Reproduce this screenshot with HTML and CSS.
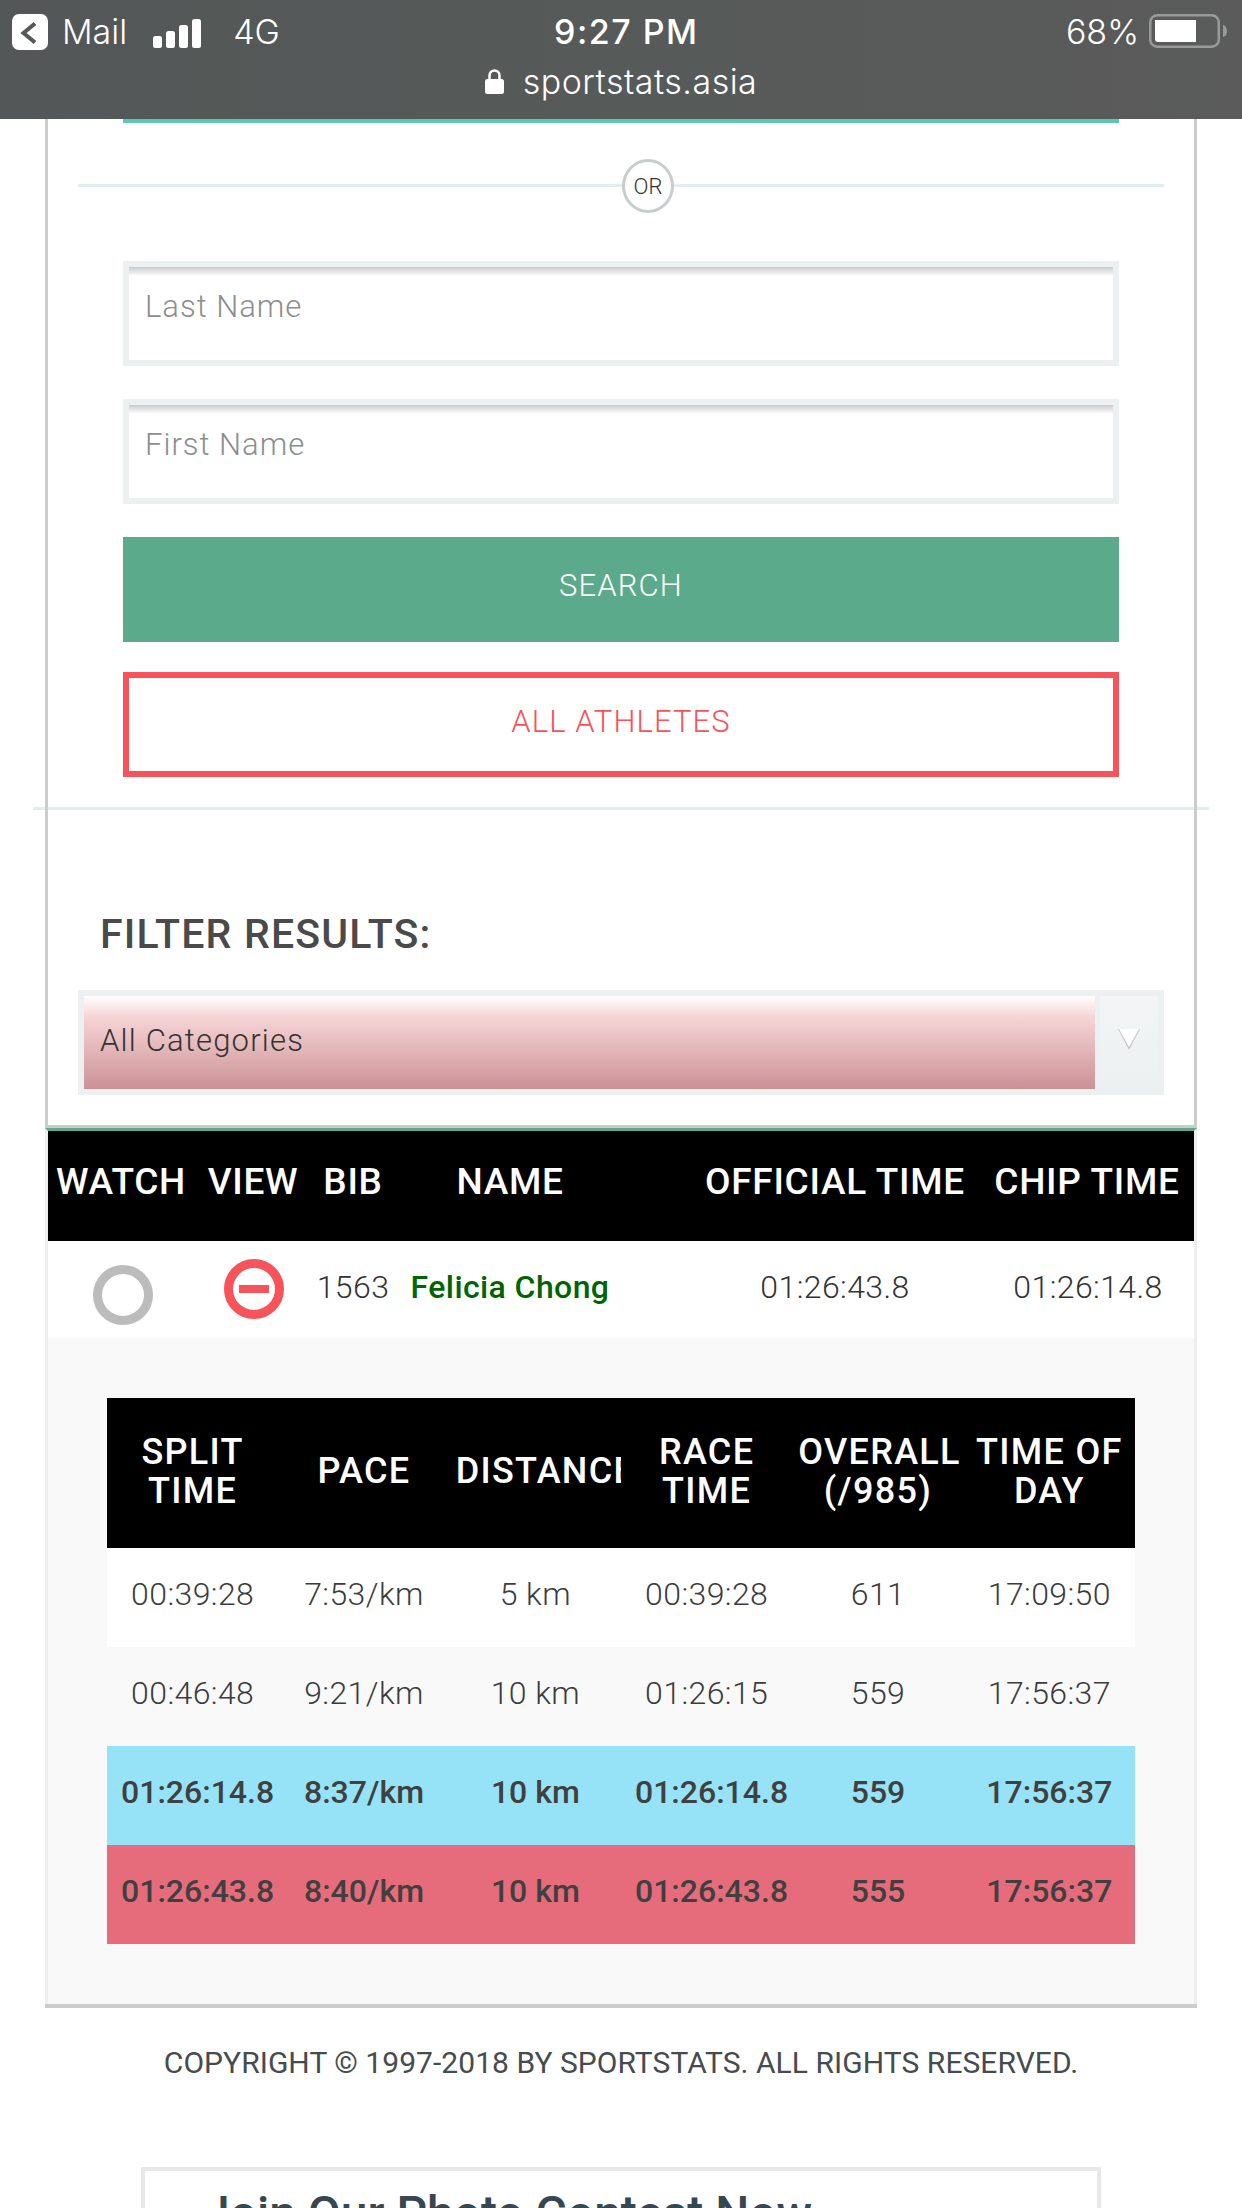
FILE: index.html
```html
<!DOCTYPE html>
<html lang="en">
<head>
<meta charset="utf-8">
<title>Sportstats results</title>
<link rel="stylesheet" href="styles.css">
</head>
<body>
<header class="status">
  <div class="status-top">
    <div class="status-left">
      <svg class="back" viewBox="0 0 36 36" width="36" height="36"><rect width="36" height="36" rx="7" fill="#fff"/><path d="M23 9.500 11.500 19 23 28.500" fill="none" stroke="#565959" stroke-width="4"/></svg>
      <span class="mail">Mail</span>
      <svg class="signal" viewBox="0 0 48 29" width="48" height="29"><rect x="0" y="17" width="9" height="12" rx="2.500" fill="#fff"/><rect x="13" y="12" width="9" height="17" rx="2.500" fill="#fff"/><rect x="26" y="6" width="9" height="23" rx="2.500" fill="#fff"/><rect x="39" y="0" width="9" height="29" rx="2.500" fill="#fff"/></svg>
      <span class="net">4G</span>
    </div>
    <div class="time">9:27 PM</div>
    <div class="status-right">
      <span class="pct">68%</span>
      <svg class="battery" viewBox="0 0 78 34" width="78" height="34"><rect x="1.250" y="1.250" width="68.500" height="31.500" rx="7" fill="none" stroke="#999b9b" stroke-width="2.500"/><path d="M6 6h41v22H9a3 3 0 0 1-3-3z" fill="#fff"/><path d="M74 11c2.500.6 4 3 4 6s-1.500 5.400-4 6z" fill="#999b9b"/></svg>
    </div>
  </div>
  <div class="url">
    <svg class="lock" viewBox="0 0 19 25" width="19" height="25"><path d="M4.500 11V6.500a5 5 0 0 1 10 0V11" fill="none" stroke="#fff" stroke-width="2.500"/><rect y="10" width="19" height="15" rx="2.500" fill="#fff"/></svg>
    <span>sportstats.asia</span>
  </div>
</header>

<main class="page">
  <section class="panel">
    <div class="teal"></div>
    <div class="or">
      <span class="or-line or-line-a"></span>
      <span class="or-badge">OR</span>
      <span class="or-line or-line-b"></span>
    </div>
    <form class="form">
      <input class="field" type="text" placeholder="Last Name">
      <input class="field" type="text" placeholder="First Name">
      <div class="btn btn-search">SEARCH</div>
      <div class="btn btn-all">ALL ATHLETES</div>
    </form>
    <div class="divider"></div>
    <h2 class="filter-title">FILTER RESULTS:</h2>
    <div class="select">
      <div class="select-value">All Categories</div>
      <div class="select-arrow">
        <svg viewBox="0 0 22 22" width="22" height="22"><path d="M0 0h22L11 21z" fill="#c3c7c9"/><path d="M1 0h20L11 18z" fill="#fff"/></svg>
      </div>
    </div>
  </section>

  <section class="results">
    <div class="rt-row rt-head">
      <div>WATCH</div><div>VIEW</div><div>BIB</div><div class="rt-name">NAME</div><div>OFFICIAL TIME</div><div>CHIP TIME</div>
    </div>
    <div class="rt-row rt-body">
      <div class="rt-watch"><svg viewBox="0 0 60 60" width="60" height="60"><circle cx="30" cy="30" r="25.500" fill="none" stroke="#bcbcbc" stroke-width="9"/></svg></div>
      <div class="rt-view"><svg viewBox="0 0 60 60" width="60" height="60"><circle cx="30" cy="30" r="25.500" fill="none" stroke="#f6535b" stroke-width="9"/><rect x="15" y="26" width="30" height="8" fill="#f6535b"/></svg></div>
      <div>1563</div>
      <div class="rt-name athlete">Felicia Chong</div>
      <div>01:26:43.8</div>
      <div class="rt-chip">01:26:14.8</div>
    </div>
    <div class="detail">
      <div class="sp-row sp-head">
        <div>SPLIT<br>TIME</div><div>PACE</div><div>DISTANCE</div><div>RACE<br>TIME</div><div>OVERALL<br>(/985)</div><div>TIME OF<br>DAY</div>
      </div>
      <div class="sp-row sp-data sp-white">
        <div>00:39:28</div><div>7:53/km</div><div>5 km</div><div>00:39:28</div><div>611</div><div>17:09:50</div>
      </div>
      <div class="sp-row sp-data">
        <div>00:46:48</div><div>9:21/km</div><div>10 km</div><div>01:26:15</div><div>559</div><div>17:56:37</div>
      </div>
      <div class="sp-row sp-data sp-blue">
        <div>01:26:14.8</div><div>8:37/km</div><div>10 km</div><div>01:26:14.8</div><div>559</div><div>17:56:37</div>
      </div>
      <div class="sp-row sp-data sp-red">
        <div>01:26:43.8</div><div>8:40/km</div><div>10 km</div><div>01:26:43.8</div><div>555</div><div>17:56:37</div>
      </div>
    </div>
  </section>

  <footer class="copyright">COPYRIGHT © 1997-2018 BY SPORTSTATS. ALL RIGHTS RESERVED.</footer>

  <aside class="contest">
    <h3>Join Our Photo Contest Now</h3>
  </aside>
</main>
</body>
</html>
```
FILE: styles.css
```css
* { box-sizing: border-box; }
html { margin: 0; padding: 0; background: #fff; }
body {
  margin: 0;
  padding: 0;
  width: 1242px;
  height: 2208px;
  overflow: hidden;
  font-family: Roboto, "Liberation Sans", sans-serif;
  color: #444;
}

/* iOS status bar */
.status {
  height: 119px;
  background: linear-gradient(90deg, #545757, #565a59 50%, #5a5b5a);
  color: #fff;
  padding-top: 14px;
  font-family: Inter, Roboto, sans-serif;
}
.status-top {
  display: grid;
  grid-template-columns: 542px auto 1fr;
  padding: 0 15px 0 12px;
  height: 36px;
  align-items: center;
  font-size: 34px;
  line-height: 36px;
}
.status-left { display: flex; align-items: center; }
.back { display: block; }
.mail { margin-left: 14px; font-weight: 300; }
.signal { display: block; margin-left: 26px; margin-top: 2px; }
.net { margin-left: 32px; font-weight: 300; }
.time { font-weight: 500; letter-spacing: 1.500px; }
.status-right { display: flex; justify-content: flex-end; align-items: center; }
.pct { font-weight: 300; margin-right: 10px; }
.battery { display: block; margin-top: -2px; }
.url {
  display: flex;
  justify-content: center;
  align-items: center;
  gap: 19px;
  margin-top: 15px;
  height: 32px;
  font-size: 34px;
  font-weight: 300;
  letter-spacing: .5px;
}
.lock { display: block; }

/* top panel */
.page { display: block; }
.panel {
  margin: 0 45px;
  border: 3px solid #ccc;
  border-top: 0;
  padding-bottom: 30px;
}
.teal { height: 4px; margin: 0 75px; background: #5bc8b6; }
.or {
  display: flex;
  align-items: center;
  margin: 36px 30px 0;
  height: 54px;
}
.or-line { height: 3px; margin-bottom: 2px; background: #e2edf0; }
.or-line-a { width: 544px; }
.or-line-b { flex: 1; }
.or-badge {
  width: 52px;
  height: 54px;
  border: 3px solid #c9cccc;
  border-radius: 50%;
  display: flex;
  align-items: center;
  justify-content: center;
  font-size: 22px;
  font-weight: 300;
  color: #333;
  background: #fff;
}
.form {
  display: flex;
  flex-direction: column;
  margin: 48px 75px 0;
  gap: 33px;
}
.field {
  display: block;
  width: 100%;
  height: 105px;
  border: 6px solid #ecf0f1;
  padding: 0 16px 14px;
  margin: 0;
  border-radius: 0;
  outline: 0;
  background: linear-gradient(#c9cbcb, #fff 9px);
  font-family: inherit;
  font-size: 31px;
  font-weight: 300;
  letter-spacing: 1px;
}
.field::placeholder { color: #8b8e8e; opacity: 1; }
.btn {
  height: 105px;
  display: flex;
  align-items: center;
  justify-content: center;
  font-size: 31px;
  font-weight: 300;
  letter-spacing: 1.100px;
  padding-bottom: 9px;
}
.btn-search { background: #5baa8c; color: #fff; }
.btn-all {
  margin-top: -3px;
  border: 6px solid #f6535b;
  color: #f6535b;
  padding-bottom: 7px;
}
/* sits behind the panel's side borders, as in the original */
.divider {
  position: relative;
  z-index: -1;
  height: 3px;
  margin: 30px -15px 0;
  background: #e2edf0;
}
.filter-title {
  margin: 0;
  padding: 103px 0 35px 52px;
  font-size: 41px;
  line-height: 42px;
  font-weight: 500;
  letter-spacing: 1.200px;
  color: #4a4a4a;
}
.select {
  display: flex;
  margin: 0 30px;
  height: 105px;
  border: 6px solid #ecf0f1;
  background: #ecf0f1;
}
.select-value {
  width: 1011px;
  background: linear-gradient(#fff 0%, #f6d5d7 22%, #cc9195 100%);
  font-size: 31px;
  font-weight: 300;
  letter-spacing: 1.200px;
  color: #333;
  padding: 25px 16px 0;
  line-height: 40px;
}
.select-arrow {
  width: 58px;
  margin-left: 5px;
  background: linear-gradient(#f3f5f6, #ecf0f1);
  display: flex;
  align-items: flex-start;
  justify-content: center;
  padding-top: 33px;
}
.select-arrow svg { display: block; }

/* results */
.results {
  margin: 0 45px;
  border: 3px solid #eee;
  border-top: 3px solid #5baa8c;
  border-bottom: 0;
  box-shadow: 0 4px 0 #ccc;
  background: #f9f9f9;
  height: 876px;
}
.rt-row {
  display: grid;
  grid-template-columns: 146px 118px 82px 296px 290px 214px;
  text-align: center;
}
.rt-name { padding-right: 64px; }
.rt-head {
  height: 110px;
  background: #000;
  color: #fff;
  font-size: 37px;
  font-weight: 500;
  letter-spacing: .7px;
  line-height: 102px;
}
.rt-body {
  height: 97px;
  background: #fff;
  font-size: 32px;
  font-weight: 300;
  line-height: 92px;
  letter-spacing: .4px;
  color: #333;
}
.rt-body > div { white-space: nowrap; }
.rt-chip { padding-left: 2px; }
.athlete { color: #006400; font-weight: 500; }
.rt-watch svg, .rt-view svg { display: block; margin: 0 auto; }
.rt-watch { padding-top: 24px; padding-left: 4px; }
.rt-view { padding-top: 18px; padding-left: 2px; }
.detail { padding: 60px 59px 0; }
.sp-row { display: grid; grid-template-columns: repeat(6, minmax(0, 1fr)); text-align: center; }
.sp-head {
  height: 150px;
  background: #000;
  color: #fff;
  font-size: 36px;
  font-weight: 500;
  letter-spacing: 1.300px;
  line-height: 39px;
  align-items: center;
  padding-bottom: 3px;
}
.sp-head > div { overflow: hidden; padding: 0 6px; white-space: nowrap; }
.sp-data {
  height: 99px;
  font-size: 32px;
  font-weight: 300;
  line-height: 92px;
  letter-spacing: .4px;
  color: #3c3c3c;
}
.sp-data > div { padding: 0 14px; white-space: nowrap; }
.sp-white { background: #fff; }
.sp-blue { background: #96e3f8; font-weight: 500; letter-spacing: 0; color: #404040; }
.sp-red { background: #e66c7b; font-weight: 500; letter-spacing: 0; color: #404040; }

/* footer */
.copyright {
  margin-top: 44px;
  height: 40px;
  text-align: center;
  font-size: 30px;
  line-height: 30px;
  font-weight: 400;
  letter-spacing: .05px;
  color: #464b4e;
}
.contest {
  margin: 79px 141px 0;
  height: 41px;
  border: 4px solid #e8e8e8;
  border-bottom: 0;
  overflow: hidden;
}
.contest h3 {
  margin: 0;
  padding: 15px 0 0 58px;
  font-size: 48px;
  line-height: 56px;
  font-weight: 500;
  color: #37474f;
}
```
